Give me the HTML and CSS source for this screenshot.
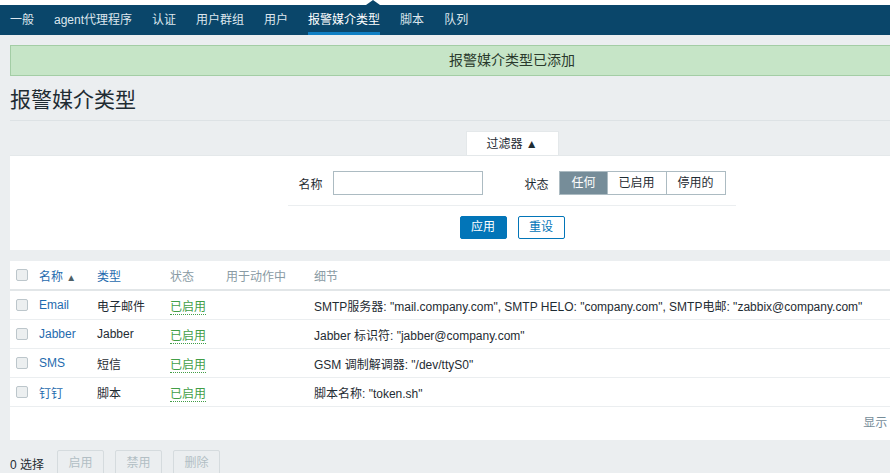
FILE: index.html
```html
<!DOCTYPE html>
<html lang="zh-CN">
<head>
<meta charset="utf-8">
<title>报警媒介类型</title>
<link rel="stylesheet" href="styles.css">
</head>
<body>
<div class="page">
  <div class="top-strip"><span class="top-arrow"></span></div>
  <nav class="subnav">
    <ul>
      <li><a href="#">一般</a></li>
      <li><a href="#">agent代理程序</a></li>
      <li><a href="#">认证</a></li>
      <li><a href="#">用户群组</a></li>
      <li><a href="#">用户</a></li>
      <li><a href="#" class="selected">报警媒介类型</a></li>
      <li><a href="#">脚本</a></li>
      <li><a href="#">队列</a></li>
    </ul>
  </nav>
  <main class="content">
    <div class="msg-good">报警媒介类型已添加</div>
    <header class="page-header"><h1>报警媒介类型</h1></header>

    <section class="filter">
      <div class="filter-tabs"><span class="filter-tab">过滤器 ▲</span></div>
      <div class="filter-box">
        <div class="filter-form">
          <div class="filter-field">
            <label class="filter-label">名称</label>
            <input class="text-input" type="text">
          </div>
          <div class="filter-field">
            <span class="filter-label">状态</span>
            <div class="segmented">
              <span class="seg active">任何</span>
              <span class="seg">已启用</span>
              <span class="seg">停用的</span>
            </div>
          </div>
        </div>
        <div class="filter-buttons">
          <button class="btn btn-primary">应用</button>
          <button class="btn btn-alt">重设</button>
        </div>
      </div>
    </section>

    <section class="table-box">
      <table class="list">
        <colgroup>
          <col class="c-cb"><col class="c-name"><col class="c-type"><col class="c-status"><col class="c-action"><col>
        </colgroup>
        <thead>
          <tr>
            <th><input type="checkbox" class="cb"></th>
            <th><a href="#">名称</a> <span class="sort">▲</span></th>
            <th><a href="#">类型</a></th>
            <th>状态</th>
            <th>用于动作中</th>
            <th>细节</th>
          </tr>
        </thead>
        <tbody>
          <tr>
            <td><input type="checkbox" class="cb"></td>
            <td><a href="#">Email</a></td>
            <td>电子邮件</td>
            <td><span class="status-on">已启用</span></td>
            <td></td>
            <td>SMTP服务器: "mail.company.com", SMTP HELO: "company.com", SMTP电邮: "zabbix@company.com"</td>
          </tr>
          <tr>
            <td><input type="checkbox" class="cb"></td>
            <td><a href="#">Jabber</a></td>
            <td>Jabber</td>
            <td><span class="status-on">已启用</span></td>
            <td></td>
            <td>Jabber 标识符: "jabber@company.com"</td>
          </tr>
          <tr>
            <td><input type="checkbox" class="cb"></td>
            <td><a href="#">SMS</a></td>
            <td>短信</td>
            <td><span class="status-on">已启用</span></td>
            <td></td>
            <td>GSM 调制解调器: "/dev/ttyS0"</td>
          </tr>
          <tr>
            <td><input type="checkbox" class="cb"></td>
            <td><a href="#">钉钉</a></td>
            <td>脚本</td>
            <td><span class="status-on">已启用</span></td>
            <td></td>
            <td>脚本名称: "token.sh"</td>
          </tr>
        </tbody>
      </table>
      <div class="table-stats">显示 已自动发现的 4 中的 4</div>
    </section>

    <div class="action-bar">
      <span class="selected-count">0 选择</span>
      <button class="btn btn-disabled">启用</button>
      <button class="btn btn-disabled">禁用</button>
      <button class="btn btn-disabled">删除</button>
    </div>
  </main>
</div>
</body>
</html>
```
FILE: styles.css
```css
html, body {
  margin: 0;
  padding: 0;
  overflow: hidden;
}
body {
  background: #ebeef0;
  font-family: "Liberation Sans", Arial, "Noto Sans CJK SC", sans-serif;
  font-size: 12px;
  color: #1f2c33;
}
.page {
  width: 1024px;
}
a {
  color: #1f6bae;
  text-decoration: none;
}

/* top strip with arrow */
.top-strip {
  height: 5px;
  background: #ffffff;
  display: flex;
  align-items: flex-end;
}
.top-arrow {
  margin-left: 366px;
  width: 0;
  height: 0;
  border-left: 7px solid transparent;
  border-right: 7px solid transparent;
  border-bottom: 5px solid #0a466a;
}

/* sub navigation */
.subnav {
  background: #0a466a;
  height: 30px;
}
.subnav ul {
  list-style: none;
  margin: 0;
  padding: 0 0 0 10px;
  display: flex;
  gap: 20px;
}
.subnav a {
  display: block;
  padding-top: 3px;
  box-sizing: border-box;
  height: 30px;
  line-height: 24px;
  border-bottom: 3px solid transparent;
  color: #dde7ee;
  white-space: nowrap;
}
.subnav a.selected {
  color: #ffffff;
  border-bottom-color: #0f7fc4;
}

/* content */
.content {
  padding: 10px 10px 0 10px;
}
.msg-good {
  background: #c6e5c7;
  border: 1px solid #a3cda5;
  line-height: 29px;
  text-align: center;
  font-size: 14px;
  color: #2a3a2c;
}
.page-header {
  border-bottom: 1px solid #dde2e5;
}
.page-header h1 {
  margin: 0;
  padding: 12px 0 8px;
  font-size: 21px;
  line-height: 24px;
  font-weight: normal;
  color: #1f2c33;
}

/* filter */
.filter {
  margin-top: 10px;
}
.filter-tabs {
  display: flex;
  justify-content: center;
}
.filter-tab {
  background: #ffffff;
  width: 93px;
  height: 24px;
  line-height: 24px;
  text-align: center;
  border: 1px solid #e4e8ea;
  border-bottom: none;
  box-sizing: border-box;
}
.filter-box {
  background: #ffffff;
  border-top: 1px solid #e4e8ea;
  padding: 15px 0 11px;
}
.filter-form {
  width: fit-content;
  margin: 0 auto;
  padding: 0 10px 10px;
  border-bottom: 1px solid #ebeef0;
  display: flex;
  gap: 41px;
}
.filter-field {
  display: flex;
  align-items: center;
  gap: 11px;
}
.text-input {
  width: 150px;
  height: 24px;
  box-sizing: border-box;
  border: 1px solid #acbbc2;
  margin: 0;
  padding: 0 5px;
  font: inherit;
}
.segmented {
  display: flex;
  height: 24px;
  border: 1px solid #acbbc2;
  box-sizing: border-box;
}
.seg {
  line-height: 22px;
  padding: 0 11px;
  border-left: 1px solid #acbbc2;
  color: #1f2c33;
}
.seg:first-child {
  border-left: none;
}
.seg.active {
  background: #768d99;
  color: #ffffff;
}
.filter-buttons {
  display: flex;
  justify-content: center;
  gap: 11px;
  margin-top: 10px;
}
.btn {
  font: inherit;
  height: 23px;
  padding: 0 10px;
  box-sizing: border-box;
  border-radius: 2px;
  margin: 0;
  line-height: 21px;
  cursor: pointer;
}
.btn-primary {
  background: #0275b8;
  border: 1px solid #0275b8;
  color: #ffffff;
  width: 47px;
}
.btn-alt {
  background: #ffffff;
  border: 1px solid #0275b8;
  color: #0275b8;
  width: 47px;
}

/* table */
.table-box {
  margin-top: 11px;
  background: #ffffff;
}
.list {
  width: 100%;
  border-collapse: separate;
  border-spacing: 0;
  table-layout: fixed;
}
.c-cb { width: 23px; }
.c-name { width: 58px; }
.c-type { width: 73px; }
.c-status { width: 56px; }
.c-action { width: 88px; }
.list th {
  height: 28px;
  padding: 0 6px;
  text-align: left;
  font-weight: normal;
  color: #8a9ba4;
  border-bottom: 2px solid #e2e6e8;
  white-space: nowrap;
  vertical-align: middle;
}
.list td {
  height: 28px;
  padding: 0 6px;
  border-bottom: 1px solid #ebeef0;
  white-space: nowrap;
  vertical-align: middle;
}
.list th:first-child,
.list td:first-child {
  padding-right: 0;
}
.sort {
  font-size: 10px;
  color: #4f5f67;
}
.cb {
  -webkit-appearance: none;
  appearance: none;
  display: block;
  width: 12px;
  height: 12px;
  margin: 0;
  border: 1px solid #bcc6cb;
  border-radius: 2px;
  background: #eceff0;
}
.status-on {
  color: #429e47;
  border-bottom: 1px dotted #429e47;
}
.table-stats {
  height: 33px;
  line-height: 33px;
  text-align: right;
  padding-right: 4px;
  color: #768d99;
}

/* action bar */
.action-bar {
  margin-top: 10px;
  display: flex;
  align-items: center;
  height: 26px;
}
.selected-count {
  margin-right: 13px;
}
.btn-disabled {
  background: #ebeef0;
  border: 1px solid #d5dbde;
  color: #b2bec4;
  width: 47px;
  height: 26px;
  margin-right: 11px;
}
```
